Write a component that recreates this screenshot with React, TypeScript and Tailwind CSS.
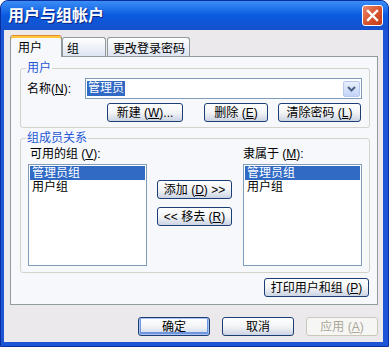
import React from "react";

function Btn({
  children,
  className = "",
  isDefault = false,
  disabled = false,
}: {
  children: React.ReactNode;
  className?: string;
  isDefault?: boolean;
  disabled?: boolean;
}) {
  if (disabled) {
    return (
      <div
        className={`h-[19px] rounded-[3px] border border-[#CAC8BB] bg-[#F6F6F4] text-[#ACA899] flex items-center justify-center text-[12px] leading-none ${className}`}
      >
        {children}
      </div>
    );
  }
  return (
    <div
      className={`h-[19px] rounded-[3px] border border-[#1B3E74] bg-linear-to-b from-white via-[#F3F4F6] to-[#CBD4E4] text-black flex items-center justify-center text-[12px] leading-none ${
        isDefault ? "shadow-[inset_0_0_0_1px_#A9C2F2,inset_0_-1px_0_2px_#6E96E0]" : ""
      } ${className}`}
    >
      {children}
    </div>
  );
}

function Key({ k }: { k: string }) {
  return (
    <>
      (<span className="underline">{k}</span>)
    </>
  );
}

function Group({
  label,
  className = "",
  children,
}: {
  label: string;
  className?: string;
  children: React.ReactNode;
}) {
  return (
    <div className={`relative rounded-[3px] border border-[#D3D3CC] ${className}`}>
      <span className="absolute -top-[8px] left-[5px] bg-[#F6F8FC] px-[1px] text-[12px] leading-[14px] text-[#1F56D6]">
        {label}
      </span>
      {children}
    </div>
  );
}

function ListBox({ items }: { items: string[] }) {
  return (
    <div className="h-[102px] w-[119px] border border-[#7F9DB9] bg-white p-[1px]">
      {items.map((it, i) => (
        <div
          key={it}
          className={`h-[14px] pl-[2px] text-[12px] leading-[14px] ${
            i === 0 ? "bg-[#316AC5] text-white" : "text-black"
          }`}
        >
          {it}
        </div>
      ))}
    </div>
  );
}

export default function App() {
  return (
    <div className="w-[389px] h-[347px] flex flex-col rounded-t-[8px] bg-[#1C55D6] border border-[#0B2E9E] font-['Liberation_Sans','Noto_Sans_CJK_SC',sans-serif] text-[12px] text-black select-none">
      {/* title bar */}
      <div className="h-[29px] shrink-0 flex items-center justify-between pl-[7px] pr-[5px] rounded-t-[7px] bg-linear-to-b from-[#3B8DF7] via-[#0A5AE0] to-[#1450CC]">
        <span className="text-white font-bold text-[16px] leading-none [text-shadow:1px_1px_0_#0C2383]">
          用户与组帐户
        </span>
        <div className="w-[21px] h-[21px] rounded-[3px] border border-white bg-linear-to-br from-[#E88A6C] via-[#D9542F] to-[#C13A17] flex items-center justify-center">
          <svg width="13" height="13" viewBox="0 0 13 13">
            <path d="M2 2 L11 11 M11 2 L2 11" stroke="white" strokeWidth="2.4" strokeLinecap="square" />
          </svg>
        </div>
      </div>

      {/* client */}
      <div className="flex-1 ml-[3px] mr-[5px] mb-[4px] bg-[#ECE9EC] flex flex-col pl-[6px] pr-[5px] pt-[5px]">
        {/* tabs */}
        <div className="h-[21px] flex items-end">
          <div className="relative z-10 -mb-[1px] h-[22px] w-[52px] rounded-t-[3px] border-x border-[#919B9C] bg-[#F6F8FC] pl-[7px] pt-[3px] shadow-[inset_0_2px_0_#FFC83C] border-t-[1px] border-t-[#E68B2C]">
            用户
          </div>
          <div className="h-[19px] w-[44px] rounded-t-[3px] border border-b-0 border-[#919B9C] bg-linear-to-b from-white to-[#DDE4F2] pl-[4px] pt-[2px]">
            组
          </div>
          <div className="ml-[1px] h-[19px] w-[83px] rounded-t-[3px] border border-b-0 border-[#919B9C] bg-linear-to-b from-white to-[#DDE4F2] pl-[5px] pt-[2px]">
            更改登录密码
          </div>
        </div>

        {/* pane */}
        <div className="h-[249px] border border-[#919B9C] bg-[#F6F8FC] flex flex-col pl-[9px] pr-[7px] pt-[11px]">
          <Group label="用户" className="h-[60px]">
            <div className="flex items-center pl-[6px] pt-[9px]">
              <span className="w-[58px]">
                名称<Key k="N" />:
              </span>
              <div className="h-[21px] w-[277px] border border-[#7F9DB9] bg-white flex items-center justify-between pl-[1px] pr-[1px]">
                <span className="bg-[#316AC5] text-white px-[1px] leading-[15px]">管理员</span>
                <div className="w-[17px] h-[16px] rounded-[2px] border border-[#B6C8EE] bg-linear-to-b from-[#E9F0FE] to-[#C4D4F6] flex items-center justify-center">
                  <svg width="9" height="6" viewBox="0 0 9 6">
                    <path d="M1 1 L4.5 4.5 L8 1" stroke="#4D6185" strokeWidth="2" fill="none" />
                  </svg>
                </div>
              </div>
            </div>
            <div className="flex justify-end pr-[8px] mt-[4px]">
              <Btn className="w-[76px]">
                新建 <Key k="W" />...
              </Btn>
              <Btn className="w-[64px] ml-[21px]">
                删除 <Key k="E" />
              </Btn>
              <Btn className="w-[83px] ml-[10px]">
                清除密码 <Key k="L" />
              </Btn>
            </div>
          </Group>

          <Group label="组成员关系" className="mt-[10px] h-[135px]">
            <div className="flex pl-[7px] pt-[8px]">
              <div className="flex flex-col">
                <span className="h-[14px] leading-[14px] pl-[2px]">
                  可用的组 <Key k="V" />:
                </span>
                <div className="mt-[3px]">
                  <ListBox items={["管理员组", "用户组"]} />
                </div>
              </div>
              <div className="ml-[10px] flex flex-col pt-[33px]">
                <Btn className="w-[75px]">
                  添加 <Key k="D" /> &gt;&gt;
                </Btn>
                <Btn className="w-[75px] mt-[8px]">
                  &lt;&lt; 移去 <Key k="R" />
                </Btn>
              </div>
              <div className="ml-[11px] flex flex-col">
                <span className="h-[14px] leading-[14px]">
                  隶属于 <Key k="M" />:
                </span>
                <div className="mt-[3px]">
                  <ListBox items={["管理员组", "用户组"]} />
                </div>
              </div>
            </div>
          </Group>

          <div className="flex justify-end pr-[1px] mt-[5px]">
            <Btn className="w-[105px]">
              打印用户和组 <Key k="P" />
            </Btn>
          </div>
        </div>

        {/* dialog buttons */}
        <div className="flex justify-end gap-[12px] mt-[12px]">
          <Btn className="w-[72px]" isDefault>
            确定
          </Btn>
          <Btn className="w-[72px]">取消</Btn>
          <Btn className="w-[72px]" disabled>
            应用 <Key k="A" />
          </Btn>
        </div>
      </div>
    </div>
  );
}
